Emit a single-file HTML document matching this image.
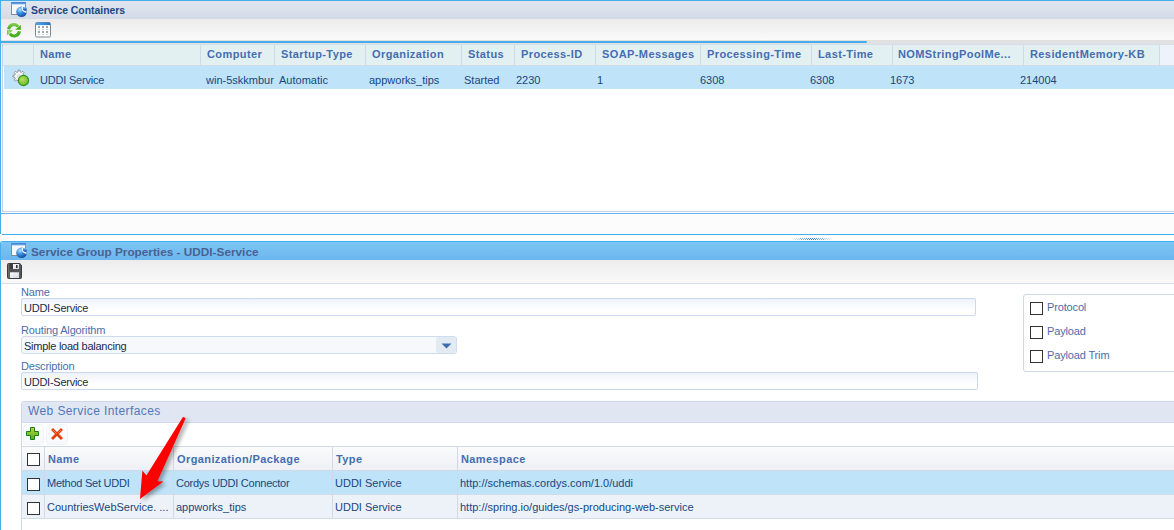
<!DOCTYPE html>
<html><head><meta charset="utf-8">
<style>
*{box-sizing:border-box;margin:0;padding:0}
html,body{width:1174px;height:530px;overflow:hidden;background:#fff;font-family:"Liberation Sans",sans-serif}
.a{position:absolute}
.t{position:absolute;white-space:nowrap;line-height:1}
.hd{font-weight:bold;font-size:11px;color:#456db2;letter-spacing:0.4px}
.cell{font-size:11px;color:#19467f}
.lbl{font-size:11px;color:#4b6ea8;letter-spacing:-0.15px}
.sep{position:absolute;width:1px;background:#d0d9e6}
.cb{position:absolute;width:13px;height:13px;border:1px solid #333;background:#fff}
</style></head><body>

<!-- ============ PANEL 1 ============ -->
<div class="a" style="left:0;top:0;width:1174px;height:1px;background:#45aeec"></div>
<div class="a" style="left:0;top:0;width:1px;height:234px;background:#45aeec"></div>
<!-- title bar -->
<div class="a" style="left:1px;top:1px;width:1173px;height:18px;background:linear-gradient(#e0e6ee,#d3dbe7)"></div>
<svg class="a" style="left:10px;top:0px" width="19" height="19" viewBox="0 0 19 19">
  <defs><radialGradient id="bg1" cx=".35" cy=".3" r=".85"><stop offset="0" stop-color="#b0e0ff"/><stop offset=".4" stop-color="#3a8ede"/><stop offset="1" stop-color="#08378a"/></radialGradient>
  <linearGradient id="tb1" x1="0" y1="0" x2="0" y2="1"><stop offset="0" stop-color="#3c78c8"/><stop offset="1" stop-color="#74b4ee"/></linearGradient>
  <linearGradient id="tt1" x1="0" y1="0" x2="0" y2="1"><stop offset="0" stop-color="#7cc0f4"/><stop offset="1" stop-color="#1452b4"/></linearGradient></defs>
  <rect x="1.5" y="2.5" width="14" height="12" fill="#f6f8fb" stroke="#858d98"/>
  <rect x="1" y="2" width="15" height="2.4" fill="url(#tb1)"/>
  <circle cx="11.5" cy="11.8" r="5.3" fill="url(#bg1)"/>
  <path d="M12.2 7.5 Q12.6 11.4 15.9 12.1" fill="none" stroke="#fff" stroke-width="1.5" stroke-linecap="round"/>
  <rect x="12.8" y="7.2" width="4" height="3" rx="1.2" fill="url(#tt1)"/>
</svg>
<div class="t" style="left:31px;top:6px;font-size:10.4px;font-weight:bold;color:#1b4686">Service Containers</div>
<!-- toolbar -->
<div class="a" style="left:1px;top:19px;width:1173px;height:21px;background:linear-gradient(#ebebeb,#fafafa)"></div>
<svg class="a" style="left:5px;top:21px" width="18" height="18" viewBox="0 0 18 18">
  <defs><linearGradient id="rg" x1="0" y1="0" x2="0" y2="1"><stop offset="0" stop-color="#7cc84a"/><stop offset="1" stop-color="#3ea81c"/></linearGradient></defs>
  <path d="M3.6 8.2 A5.4 5.4 0 0 1 13.2 5.6" fill="none" stroke="url(#rg)" stroke-width="3"/>
  <path d="M15.9 4 L15.9 8.8 L10.2 8.8 Z" fill="#45ad20"/>
  <path d="M14.4 10.2 A5.4 5.4 0 0 1 4.8 12.8" fill="none" stroke="#48ae22" stroke-width="3"/>
  <path d="M2 9.2 L7.8 9.2 L2.2 14.2 Z" fill="#6cc23a"/>
  <circle cx="4" cy="11" r="1.3" fill="#b4e27a" opacity=".8"/>
</svg>
<svg class="a" style="left:35px;top:22px" width="16" height="16" viewBox="0 0 16 16">
  <defs><linearGradient id="gh" x1="0" x2="1"><stop offset="0" stop-color="#48a8ec"/><stop offset="1" stop-color="#2a70cc"/></linearGradient></defs>
  <rect x="0.5" y="0.5" width="15" height="14.5" rx="1.2" fill="#fff" stroke="#7b8797"/>
  <rect x="1" y="0.5" width="14" height="2.6" fill="url(#gh)"/>
  <g fill="#9ba5b1"><rect x="3" y="4" width="2" height="2"/><rect x="7" y="4" width="2" height="2"/><rect x="11" y="4" width="2" height="2"/>
  <rect x="3" y="9" width="2" height="2"/><rect x="7" y="9" width="2" height="2"/><rect x="11" y="9" width="2" height="2"/></g>
  <g fill="#cdd4dd"><rect x="3" y="7" width="2" height="1"/><rect x="7" y="7" width="2" height="1"/><rect x="11" y="7" width="2" height="1"/>
  <rect x="3" y="12" width="2" height="1"/><rect x="7" y="12" width="2" height="1"/><rect x="11" y="12" width="2" height="1"/></g>
</svg>
<!-- strip -->
<div class="a" style="left:1px;top:40px;width:1173px;height:4px;background:#e1e1e1"></div>
<div class="a" style="left:1px;top:41px;width:866px;height:2px;background:#47adea;border-radius:0 1px 1px 0"></div>
<!-- grid -->
<div class="a" style="left:2px;top:44px;width:1px;height:168px;background:#c6d0e0"></div>
<div class="a" style="left:2px;top:211px;width:1172px;height:1px;background:#c6d0e6"></div>
<div class="a" style="left:3px;top:44px;width:1171px;height:1px;background:#d6deec"></div>
<div class="a" style="left:3px;top:45px;width:1156px;height:20px;background:#e2f0f1"></div>
<div class="a" style="left:1159px;top:45px;width:15px;height:20px;background:#eef3fb"></div>
<div class="a" style="left:3px;top:65px;width:1171px;height:1px;background:#d3dbe6"></div>
<div class="a" style="left:4px;top:66px;width:1170px;height:23px;background:#bfe3f8"></div>
<div class="sep" style="left:33px;top:45px;height:20px"></div>
<div class="sep" style="left:200px;top:45px;height:20px"></div>
<div class="sep" style="left:274px;top:45px;height:20px"></div>
<div class="sep" style="left:365px;top:45px;height:20px"></div>
<div class="sep" style="left:461px;top:45px;height:20px"></div>
<div class="sep" style="left:514px;top:45px;height:20px"></div>
<div class="sep" style="left:595px;top:45px;height:20px"></div>
<div class="sep" style="left:700px;top:45px;height:20px"></div>
<div class="sep" style="left:811px;top:45px;height:20px"></div>
<div class="sep" style="left:892px;top:45px;height:20px"></div>
<div class="sep" style="left:1023px;top:45px;height:20px"></div>
<div class="sep" style="left:1159px;top:45px;height:20px"></div>
<div class="t hd" style="left:40px;top:49px">Name</div>
<div class="t hd" style="left:207px;top:49px">Computer</div>
<div class="t hd" style="left:281px;top:49px">Startup-Type</div>
<div class="t hd" style="left:372px;top:49px">Organization</div>
<div class="t hd" style="left:468px;top:49px">Status</div>
<div class="t hd" style="left:521px;top:49px">Process-ID</div>
<div class="t hd" style="left:602px;top:49px">SOAP-Messages</div>
<div class="t hd" style="left:707px;top:49px">Processing-Time</div>
<div class="t hd" style="left:818px;top:49px">Last-Time</div>
<div class="t hd" style="left:898px;top:49px">NOMStringPoolMe...</div>
<div class="t hd" style="left:1030px;top:49px">ResidentMemory-KB</div>
<svg class="a" style="left:12px;top:69px" width="18" height="18" viewBox="0 0 18 18">
  <defs><radialGradient id="gg" cx=".4" cy=".4" r=".6"><stop offset="0" stop-color="#b8e060"/><stop offset="1" stop-color="#6cb82a"/></radialGradient></defs>
  <path d="M11.48 6.15 L13.24 6.37 L13.24 8.03 L11.48 8.25 L10.94 9.55 L12.03 10.96 L10.86 12.13 L9.45 11.04 L8.15 11.58 L7.93 13.34 L6.27 13.34 L6.05 11.58 L4.75 11.04 L3.34 12.13 L2.17 10.96 L3.26 9.55 L2.72 8.25 L0.96 8.03 L0.96 6.37 L2.72 6.15 L3.26 4.85 L2.17 3.44 L3.34 2.27 L4.75 3.36 L6.05 2.82 L6.27 1.06 L7.93 1.06 L8.15 2.82 L9.45 3.36 L10.86 2.27 L12.03 3.44 L10.94 4.85 Z" fill="#f6f6f6" stroke="#8a8a8a" stroke-width="0.9" stroke-linejoin="miter"/><circle cx="7.1" cy="7.2" r="2.2" fill="#d0d0d0" opacity=".6"/>
  <circle cx="11.5" cy="11.5" r="5.1" fill="url(#gg)" stroke="#2f9418" stroke-width="1.1"/>
</svg>
<div class="t cell" style="left:40px;top:75px;letter-spacing:-0.2px">UDDI Service</div>
<div class="t cell" style="left:206px;top:75px">win-5skkmbur</div>
<div class="t cell" style="left:279px;top:75px">Automatic</div>
<div class="t cell" style="left:369px;top:75px">appworks_tips</div>
<div class="t cell" style="left:464px;top:75px">Started</div>
<div class="t cell" style="left:516px;top:75px">2230</div>
<div class="t cell" style="left:597px;top:75px">1</div>
<div class="t cell" style="left:700px;top:75px">6308</div>
<div class="t cell" style="left:810px;top:75px">6308</div>
<div class="t cell" style="left:890px;top:75px">1673</div>
<div class="t cell" style="left:1020px;top:75px">214004</div>
<!-- lower strip -->
<div class="a" style="left:1px;top:213px;width:1173px;height:1px;background:#6aaeec"></div>
<div class="a" style="left:1px;top:214px;width:1173px;height:20px;background:#fcfcfc"></div>
<div class="a" style="left:2px;top:234px;width:1172px;height:1px;background:#45aeec"></div>
<!-- splitter handle -->
<svg class="a" style="left:792px;top:238px" width="40" height="2" viewBox="0 0 40 2" shape-rendering="crispEdges"><rect x="0" y="0" width="1" height="1" fill="#1a6fd8" opacity="0.03"/><rect x="2" y="0" width="1" height="1" fill="#1a6fd8" opacity="0.12"/><rect x="4" y="0" width="1" height="1" fill="#1a6fd8" opacity="0.22"/><rect x="6" y="0" width="1" height="1" fill="#1a6fd8" opacity="0.32"/><rect x="8" y="0" width="1" height="1" fill="#1a6fd8" opacity="0.43"/><rect x="10" y="0" width="1" height="1" fill="#1a6fd8" opacity="0.53"/><rect x="12" y="0" width="1" height="1" fill="#1a6fd8" opacity="0.62"/><rect x="14" y="0" width="1" height="1" fill="#1a6fd8" opacity="0.72"/><rect x="16" y="0" width="1" height="1" fill="#1a6fd8" opacity="0.82"/><rect x="18" y="0" width="1" height="1" fill="#1a6fd8" opacity="0.93"/><rect x="20" y="0" width="1" height="1" fill="#1a6fd8" opacity="0.97"/><rect x="22" y="0" width="1" height="1" fill="#1a6fd8" opacity="0.88"/><rect x="24" y="0" width="1" height="1" fill="#1a6fd8" opacity="0.78"/><rect x="26" y="0" width="1" height="1" fill="#1a6fd8" opacity="0.68"/><rect x="28" y="0" width="1" height="1" fill="#1a6fd8" opacity="0.57"/><rect x="30" y="0" width="1" height="1" fill="#1a6fd8" opacity="0.47"/><rect x="32" y="0" width="1" height="1" fill="#1a6fd8" opacity="0.38"/><rect x="34" y="0" width="1" height="1" fill="#1a6fd8" opacity="0.28"/><rect x="36" y="0" width="1" height="1" fill="#1a6fd8" opacity="0.18"/><rect x="38" y="0" width="1" height="1" fill="#1a6fd8" opacity="0.07"/><rect x="1" y="1" width="1" height="1" fill="#1a6fd8" opacity="0.07"/><rect x="3" y="1" width="1" height="1" fill="#1a6fd8" opacity="0.18"/><rect x="5" y="1" width="1" height="1" fill="#1a6fd8" opacity="0.28"/><rect x="7" y="1" width="1" height="1" fill="#1a6fd8" opacity="0.38"/><rect x="9" y="1" width="1" height="1" fill="#1a6fd8" opacity="0.47"/><rect x="11" y="1" width="1" height="1" fill="#1a6fd8" opacity="0.57"/><rect x="13" y="1" width="1" height="1" fill="#1a6fd8" opacity="0.68"/><rect x="15" y="1" width="1" height="1" fill="#1a6fd8" opacity="0.78"/><rect x="17" y="1" width="1" height="1" fill="#1a6fd8" opacity="0.88"/><rect x="19" y="1" width="1" height="1" fill="#1a6fd8" opacity="0.97"/><rect x="21" y="1" width="1" height="1" fill="#1a6fd8" opacity="0.93"/><rect x="23" y="1" width="1" height="1" fill="#1a6fd8" opacity="0.82"/><rect x="25" y="1" width="1" height="1" fill="#1a6fd8" opacity="0.72"/><rect x="27" y="1" width="1" height="1" fill="#1a6fd8" opacity="0.62"/><rect x="29" y="1" width="1" height="1" fill="#1a6fd8" opacity="0.53"/><rect x="31" y="1" width="1" height="1" fill="#1a6fd8" opacity="0.43"/><rect x="33" y="1" width="1" height="1" fill="#1a6fd8" opacity="0.32"/><rect x="35" y="1" width="1" height="1" fill="#1a6fd8" opacity="0.22"/><rect x="37" y="1" width="1" height="1" fill="#1a6fd8" opacity="0.12"/><rect x="39" y="1" width="1" height="1" fill="#1a6fd8" opacity="0.03"/></svg>

<!-- ============ PANEL 2 ============ -->
<div class="a" style="left:0;top:241px;width:1174px;height:289px;border-left:1px solid #45aeec;border-top:1px solid #45aeec;border-top-left-radius:3px"></div>
<div class="a" style="left:1px;top:242px;width:1173px;height:18px;background:linear-gradient(#7cc6f4,#6bb6ee);border-top-left-radius:2px"></div>
<svg class="a" style="left:10px;top:241px" width="19" height="19" viewBox="0 0 19 19">
  <defs><radialGradient id="bg2" cx=".35" cy=".3" r=".85"><stop offset="0" stop-color="#b0e0ff"/><stop offset=".4" stop-color="#3a8ede"/><stop offset="1" stop-color="#08378a"/></radialGradient>
  <linearGradient id="tb2" x1="0" y1="0" x2="0" y2="1"><stop offset="0" stop-color="#3c78c8"/><stop offset="1" stop-color="#74b4ee"/></linearGradient>
  <linearGradient id="tt2" x1="0" y1="0" x2="0" y2="1"><stop offset="0" stop-color="#7cc0f4"/><stop offset="1" stop-color="#1452b4"/></linearGradient></defs>
  <rect x="1.5" y="2.5" width="14" height="12" fill="#f6f8fb" stroke="#858d98"/>
  <rect x="1" y="2" width="15" height="2.4" fill="url(#tb2)"/>
  <circle cx="11.5" cy="11.8" r="5.3" fill="url(#bg2)"/>
  <path d="M12.2 7.5 Q12.6 11.4 15.9 12.1" fill="none" stroke="#fff" stroke-width="1.5" stroke-linecap="round"/>
  <rect x="12.8" y="7.2" width="4" height="3" rx="1.2" fill="url(#tt2)"/>
</svg>
<div class="t" style="left:31px;top:247px;font-size:11.8px;font-weight:bold;color:#4a6192">Service Group Properties - UDDI-Service</div>
<div class="a" style="left:1px;top:260px;width:1173px;height:23px;background:linear-gradient(#ececec,#fafafa)"></div>
<div class="a" style="left:1px;top:283px;width:1173px;height:1px;background:#d3dff0"></div>
<svg class="a" style="left:7px;top:263px" width="16" height="16" viewBox="0 0 16 16">
  <defs><linearGradient id="sv" x1="0" x2="1"><stop offset="0" stop-color="#7a7a7a"/><stop offset=".2" stop-color="#505050"/><stop offset="1" stop-color="#5a5a5a"/></linearGradient>
  <linearGradient id="sl" x1="0" y1="0" x2="1" y2="1"><stop offset="0" stop-color="#fbfcfe"/><stop offset="1" stop-color="#d4d9e2"/></linearGradient></defs>
  <path d="M0.5 1.5 Q0.5 0.5 1.5 0.5 H12.8 L14.5 2.2 V14.5 Q14.5 15.5 13.5 15.5 H1.5 Q0.5 15.5 0.5 14.5 Z" fill="url(#sv)" stroke="#3c3c3c"/>
  <rect x="2.5" y="1" width="3.5" height="5" fill="#3e3e3e"/>
  <rect x="6" y="1" width="6" height="5" fill="url(#sl)"/>
  <rect x="9" y="2" width="1.6" height="3" fill="#333"/>
  <rect x="3" y="9.3" width="9" height="5.7" fill="url(#sl)"/>
</svg>
<!-- form -->
<div class="t lbl" style="left:21px;top:287px">Name</div>
<div class="a" style="left:21px;top:298px;width:955px;height:18px;border:1px solid #cad9ed;border-radius:2px;background:linear-gradient(#eef2f8,#fff 70%)"></div>
<div class="t" style="left:24px;top:303px;font-size:11px;letter-spacing:-0.25px;color:#1c2c48">UDDI-Service</div>
<div class="t lbl" style="left:21px;top:325px">Routing Algorithm</div>
<div class="a" style="left:21px;top:336px;width:436px;height:18px;border:1px solid #cfdcec;border-radius:3px;background:#f6f8fc"></div>
<div class="a" style="left:436px;top:337px;width:20px;height:16px;border-radius:3px;background:#e2eaf4"></div>
<svg class="a" style="left:441px;top:343px" width="11" height="6" viewBox="0 0 11 6"><path d="M0.5 0.5 L10.5 0.5 L5.5 5.5 Z" fill="#3b6fae"/></svg>
<div class="t" style="left:24px;top:341px;font-size:11px;letter-spacing:-0.25px;color:#1c2c48">Simple load balancing</div>
<div class="t lbl" style="left:21px;top:361px">Description</div>
<div class="a" style="left:21px;top:372px;width:957px;height:18px;border:1px solid #cad9ed;border-radius:2px;background:linear-gradient(#eef2f8,#fff 70%)"></div>
<div class="t" style="left:24px;top:377px;font-size:11px;letter-spacing:-0.25px;color:#1c2c48">UDDI-Service</div>
<!-- checkbox group -->
<div class="a" style="left:1023px;top:294px;width:160px;height:78px;border:1px solid #cbd8ea;border-radius:3px"></div>
<div class="cb" style="left:1030px;top:302px"></div>
<div class="cb" style="left:1030px;top:326px"></div>
<div class="cb" style="left:1030px;top:350px"></div>
<div class="t lbl" style="left:1047px;top:302px;font-size:11px">Protocol</div>
<div class="t lbl" style="left:1047px;top:326px;font-size:11px">Payload</div>
<div class="t lbl" style="left:1047px;top:350px;font-size:11px">Payload Trim</div>

<!-- WSI panel -->
<div class="a" style="left:21px;top:401px;width:1160px;height:140px;border-left:1px solid #cdd8e8;border-top:1px solid #cdd8e8;border-top-left-radius:3px"></div>
<div class="a" style="left:22px;top:402px;width:1152px;height:20px;background:#e0e7f3"></div>
<div class="a" style="left:22px;top:422px;width:1152px;height:1px;background:#d3dcea"></div>
<div class="t" style="left:28px;top:405px;font-size:12px;letter-spacing:0.4px;color:#5277b8">Web Service Interfaces</div>
<div class="a" style="left:23px;top:424px;width:21px;height:21px;border-radius:4px;background:linear-gradient(#fdfdfe,#f6f8fa);border:1px solid #f1f4f8"></div>
<div class="a" style="left:46px;top:424px;width:22px;height:21px;border-radius:4px;background:linear-gradient(#fdfdfe,#f6f8fa);border:1px solid #f1f4f8"></div>
<svg class="a" style="left:26px;top:427px" width="14" height="14" viewBox="0 0 14 14">
  <defs><linearGradient id="pg" x1="0" y1="0" x2="0" y2="1"><stop offset="0" stop-color="#b0dc40"/><stop offset="1" stop-color="#58a81c"/></linearGradient></defs>
  <path d="M4.5 0.5 H8.5 V4.5 H12.5 V8.5 H8.5 V12.5 H4.5 V8.5 H0.5 V4.5 H4.5 Z" fill="url(#pg)" stroke="#1f7c12" stroke-width="1"/>
</svg>
<svg class="a" style="left:50px;top:427px" width="14" height="14" viewBox="0 0 14 14">
  <path d="M3 3 L11 11 M11 3 L3 11" stroke="#e2400e" stroke-width="2.8" stroke-linecap="square"/>
  <path d="M3.2 3.2 L6.6 6.6 M10.8 3.2 L8.2 5.8" stroke="#ffa060" stroke-width="0.9" opacity=".9"/>
</svg>
<!-- grid -->
<div class="a" style="left:22px;top:446px;width:1152px;height:1px;background:#d0d9e8"></div>
<div class="a" style="left:22px;top:447px;width:1152px;height:23px;background:linear-gradient(#fbfbfc,#eef0f5)"></div>
<div class="a" style="left:22px;top:470px;width:1152px;height:1px;background:#d0d9e8"></div>
<div class="a" style="left:22px;top:471px;width:1152px;height:23px;background:#bfe3f8"></div>
<div class="a" style="left:22px;top:494px;width:1152px;height:1px;background:#d3dcea"></div>
<div class="a" style="left:22px;top:495px;width:1152px;height:23px;background:#edf2f9"></div>
<div class="a" style="left:22px;top:518px;width:1152px;height:1px;background:#d3dcea"></div>
<div class="sep" style="left:44px;top:447px;height:71px"></div>
<div class="sep" style="left:173px;top:447px;height:71px"></div>
<div class="sep" style="left:332px;top:447px;height:71px"></div>
<div class="sep" style="left:457px;top:447px;height:71px"></div>
<div class="cb" style="left:27px;top:453px"></div>
<div class="cb" style="left:27px;top:478px"></div>
<div class="cb" style="left:27px;top:502px"></div>
<div class="t hd" style="left:48px;top:454px">Name</div>
<div class="t hd" style="left:177px;top:454px">Organization/Package</div>
<div class="t hd" style="left:336px;top:454px">Type</div>
<div class="t hd" style="left:461px;top:454px">Namespace</div>
<div class="t cell" style="left:47px;top:478px;letter-spacing:-0.25px">Method Set UDDI</div>
<div class="t cell" style="left:176px;top:478px;letter-spacing:-0.25px">Cordys UDDI Connector</div>
<div class="t cell" style="left:335px;top:478px">UDDI Service</div>
<div class="t cell" style="left:460px;top:478px">http://schemas.cordys.com/1.0/uddi</div>
<div class="t cell" style="left:47px;top:502px">CountriesWebService. ...</div>
<div class="t cell" style="left:176px;top:502px">appworks_tips</div>
<div class="t cell" style="left:335px;top:502px">UDDI Service</div>
<div class="t cell" style="left:460px;top:502px">http://spring.io/guides/gs-producing-web-service</div>

<!-- red arrow -->
<svg class="a" style="left:0;top:0" width="1174" height="530" viewBox="0 0 1174 530">
  <defs><filter id="sh" x="-50%" y="-50%" width="200%" height="200%"><feGaussianBlur in="SourceAlpha" stdDeviation="2"/><feOffset dx="3" dy="2"/><feComponentTransfer><feFuncA type="linear" slope=".35"/></feComponentTransfer><feMerge><feMergeNode/><feMergeNode in="SourceGraphic"/></feMerge></filter></defs>
  <path d="M182.6 417.4 Q184 416 185.6 418.6 L157.5 481.2 L163.5 481.6 L140 499 L142.4 470.5 L146.4 475.4 Z" fill="#ff0000" filter="url(#sh)"/>
</svg>
</body></html>
